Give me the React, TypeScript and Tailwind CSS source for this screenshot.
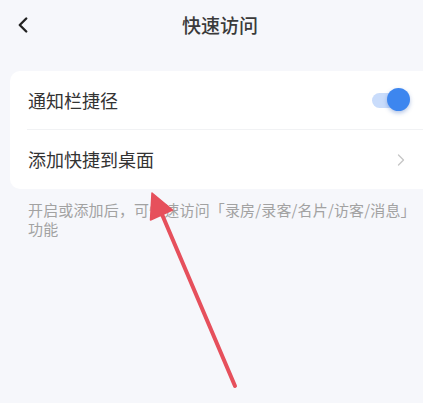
import { ChevronLeft, ChevronRight } from "lucide-react";

const font = { fontFamily: '"Noto Sans CJK SC", "Noto Sans", sans-serif' };

function Toggle({ on }: { on: boolean }) {
  return (
    <div className="relative flex h-[24px] w-[36px] items-center">
      <div className={`h-[15px] w-[32px] rounded-full ${on ? "bg-[#c9dcfb]" : "bg-[#e3e3e3]"}`} />
      <div
        className={`absolute top-0 h-[23px] w-[23px] rounded-full shadow-[0_2px_4px_rgba(40,90,180,0.35)] ${
          on ? "right-[-2px] bg-[#3d86ef]" : "left-0 bg-white"
        }`}
      />
    </div>
  );
}

export default function App() {
  return (
    <div className="relative min-h-screen w-full overflow-hidden bg-[#f6f7fb]" style={font}>
      {/* Header */}
      <div className="relative flex h-[50px] items-center justify-center pl-[17px]">
        <ChevronLeft size={26} strokeWidth={2.2} className="absolute left-[10px] top-[12px] text-[#222]" />
        <h1 className="text-[19px] font-medium text-[#3a3a3a]">快速访问</h1>
      </div>

      {/* Card */}
      <div className="ml-[10px] mt-[21px] rounded-l-[10px] bg-white">
        <div className="flex h-[58px] items-center justify-between pl-[18px] pr-[15px]">
          <span className="text-[18px] text-[#333]">通知栏捷径</span>
          <Toggle on />
        </div>
        <div className="ml-[17px] h-px bg-[#f1f2f4]" />
        <div className="flex h-[59px] items-center justify-between pl-[18px] pr-[12px]">
          <span className="text-[18px] text-[#333]">添加快捷到桌面</span>
          <ChevronRight size={20} strokeWidth={1.6} className="text-[#c6c6c6]" />
        </div>
      </div>

      {/* Hint */}
      <p className="mt-[11px] pl-[28px] pr-[4px] text-[15px] leading-[19px] tracking-[0.15px] text-[#a2a2a2]">
        开启或添加后，可快速访问「录房/录客/名片/访客/消息」
        <br />
        功能
      </p>

      {/* Annotation arrow */}
      <svg className="pointer-events-none absolute left-0 top-0" width="423" height="403" viewBox="0 0 423 403">
        <line x1="235" y1="386" x2="161" y2="212" stroke="#e6505c" strokeWidth="4" strokeLinecap="round" />
        <polygon points="152,193 172.5,210 150.5,220" fill="#e6505c" stroke="#e6505c" strokeWidth="1.5" strokeLinejoin="round" />
      </svg>
    </div>
  );
}
